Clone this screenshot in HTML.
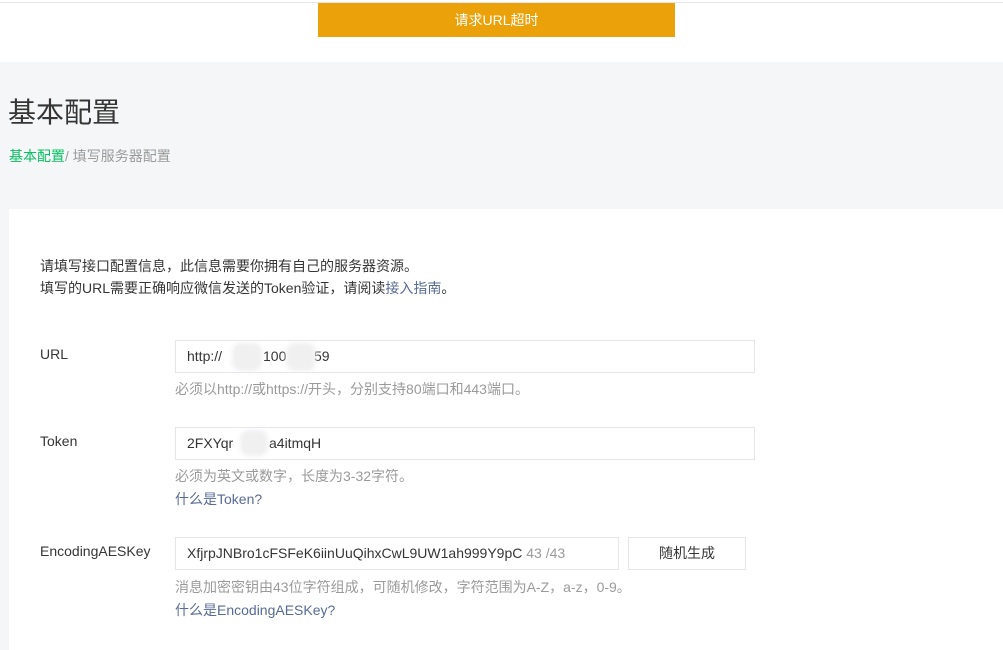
<html><head><style>
body{margin:0;width:1003px;height:650px;overflow:hidden;background:#f5f6f8;font-family:"Liberation Sans","Noto Sans CJK SC",sans-serif;font-size:14px;color:#353535;position:relative}
.a{position:absolute;white-space:nowrap}
.inp{position:absolute;border:1px solid #e4e6eb;background:#fff;box-sizing:border-box;padding-left:11px;line-height:30px;font-size:14px;color:#353535}
.tip{color:#9a9a9a;font-size:14px}
.lk{color:#576b95}
.blur{position:absolute;background:#f0f0f0;border-radius:9px;filter:blur(2px)}
</style></head><body>
<div class="a" style="left:0;top:0;width:1003px;height:62px;background:#fff"></div>
<div class="a" style="left:0;top:2px;width:1003px;height:1px;background:#e6e6e6"></div>
<div class="a" style="left:318px;top:3px;width:357px;height:34px;background:#eba10a;color:#fff;text-align:center;line-height:34px;font-size:14px">请求URL超时</div>
<div class="a" style="left:8px;top:91px;font-size:28px;color:#353535">基本配置</div>
<div class="a" style="left:9px;top:146px;font-size:14px;color:#9a9a9a"><span style="color:#07c160">基本配置</span>/ 填写服务器配置</div>
<div class="a" style="left:9px;top:209px;width:994px;height:441px;background:#fff"></div>
<div class="a" style="left:40px;top:255px;line-height:22px">请填写接口配置信息，此信息需要你拥有自己的服务器资源。<br>填写的URL需要正确响应微信发送的Token验证，请阅读<span class="lk">接入指南</span>。</div>
<div class="a" style="left:40px;top:346px">URL</div>
<div class="inp" style="left:175px;top:340px;width:580px;height:33px"></div>
<div class="a" style="left:187px;top:348px">http://</div>
<div class="a" style="left:263px;top:348px">100</div>
<div class="a" style="left:314px;top:348px">59</div>
<div class="blur" style="left:232px;top:343px;width:30px;height:28px"></div>
<div class="blur" style="left:286px;top:343px;width:30px;height:28px"></div>
<div class="a tip" style="left:175px;top:379px">必须以http://或https://开头，分别支持80端口和443端口。</div>
<div class="a" style="left:40px;top:433px">Token</div>
<div class="inp" style="left:175px;top:427px;width:580px;height:33px"></div>
<div class="a" style="left:187px;top:435px">2FXYqr</div>
<div class="a" style="left:269px;top:435px">a4itmqH</div>
<div class="blur" style="left:240px;top:430px;width:28px;height:26px"></div>
<div class="a tip" style="left:175px;top:466px">必须为英文或数字，长度为3-32字符。</div>
<div class="a lk" style="left:175px;top:489px">什么是Token?</div>
<div class="a" style="left:40px;top:543px">EncodingAESKey</div>
<div class="inp" style="left:175px;top:537px;width:444px;height:33px">XfjrpJNBro1cFSFeK6iinUuQihxCwL9UW1ah999Y9pC <span style="color:#9a9a9a">43 /43</span></div>
<div class="inp" style="left:628px;top:537px;width:118px;height:33px;padding:0;text-align:center">随机生成</div>
<div class="a tip" style="left:175px;top:577px">消息加密密钥由43位字符组成，可随机修改，字符范围为A-Z，a-z，0-9。</div>
<div class="a lk" style="left:175px;top:600px">什么是EncodingAESKey?</div>
</body></html>
